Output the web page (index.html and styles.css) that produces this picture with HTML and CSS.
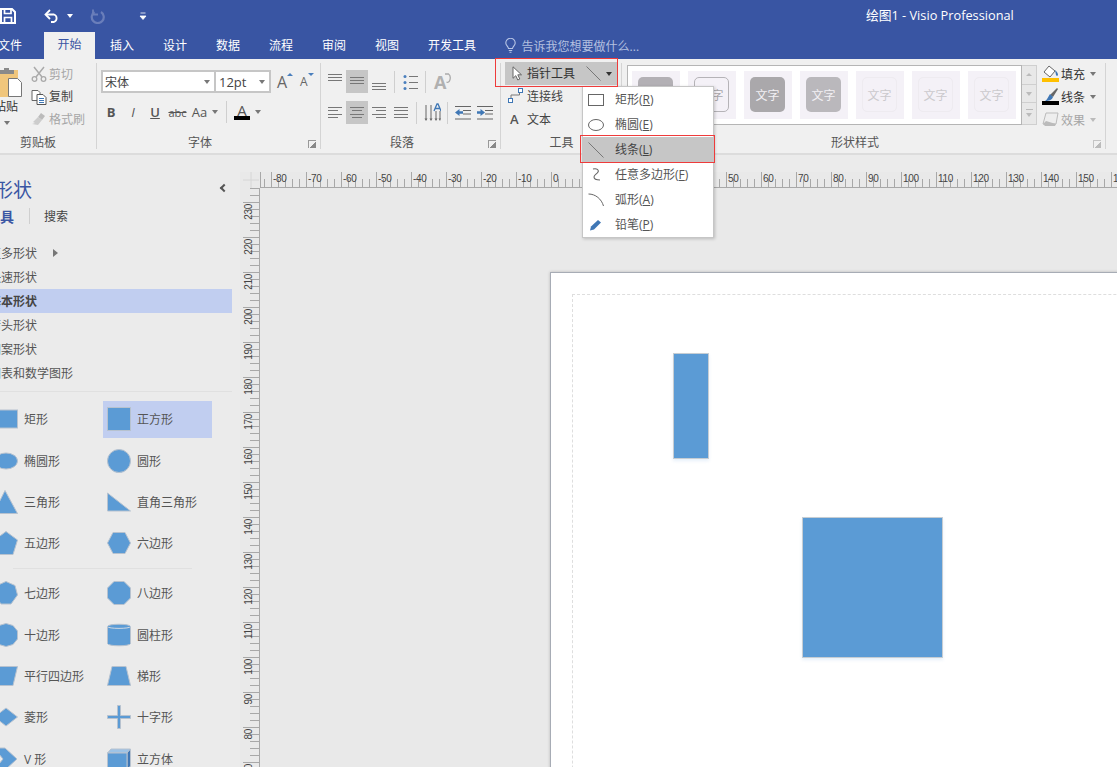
FILE: index.html
```html
<!DOCTYPE html>
<html lang="zh-CN">
<head>
    <meta charset="UTF-8">
    <title>绘图1 - Visio Professional</title>
    <link rel="stylesheet" href="styles.css">
</head>
<body>
<div class="app">
    <!-- title bar -->
    <div class="titlebar">
        <svg class="qa-save" width="16" height="16" viewBox="0 0 16 16"><path d="M1 1h11l3 3v11H1z" fill="none" stroke="#fff" stroke-width="2"/><path d="M4.500 1v4.500h6.500V1M4.500 15V9.500h7V15" fill="none" stroke="#fff" stroke-width="1.700"/></svg>
        <svg class="qa-undo" width="16" height="14" viewBox="0 0 16 14"><path d="M2 5.500h8a4 4 0 0 1 0 7.500H7" fill="none" stroke="#fff" stroke-width="1.800"/><path d="M6 1 1.500 5.500 6 10" fill="none" stroke="#fff" stroke-width="1.800"/></svg>
        <span class="caret caret-white qa-caret"></span>
        <svg class="qa-redo" width="15" height="15" viewBox="0 0 15 15"><path d="M4.500 3a6 6 0 1 0 6.500 0" fill="none" stroke="#6a7eba" stroke-width="2.200"/><path d="M3 .5v5h5" fill="none" stroke="#6a7eba" stroke-width="1.800"/></svg>
        <svg class="qa-more" width="8" height="8" viewBox="0 0 8 8"><path d="M1.500 1h5M1 4h6l-3 3.500z" fill="#fff" stroke="#fff" stroke-width=".8"/></svg>
        <div class="doc-title">绘图1 - Visio Professional</div>
    </div>

    <!-- tabs -->
    <div class="tabs">
        <span class="tab tab-file">文件</span>
        <span class="tab tab-active">开始</span>
        <span class="tab tab-first">插入</span>
        <span class="tab">设计</span>
        <span class="tab">数据</span>
        <span class="tab">流程</span>
        <span class="tab">审阅</span>
        <span class="tab">视图</span>
        <span class="tab">开发工具</span>
        <svg class="bulb" width="11" height="15" viewBox="0 0 11 15"><path d="M3.500 10.500C3 8 .8 7.500.8 5a4.700 4.700 0 0 1 9.400 0c0 2.500-2.200 3-2.700 5.500z" fill="none" stroke="#b9c6e6" stroke-width="1.100"/><path d="M3.800 12.500h3.400M4.500 14.300h2" stroke="#b9c6e6" stroke-width="1.100"/></svg>
        <span class="tell-me">告诉我您想要做什么...</span>
    </div>

    <!-- ribbon -->
    <div class="ribbon">
        <div class="group group-clip">
            <div class="group-body clip-body">
                <div class="paste">
                    <svg width="23" height="31" viewBox="0 0 23 31"><path d="M0 3h18v27H0z" fill="#f0c67c"/><path d="M0 3h4V1h5v2h5v4H0z" fill="#8a8a8a"/><path d="M8.500 11.500h9l4 4v14h-13z" fill="#fff" stroke="#777"/></svg>
                    <span class="paste-label">粘贴</span>
                    <span class="caret paste-caret"></span>
                </div>
                <div class="clip-list">
                    <div class="clip-row muted">
                        <svg width="16" height="16" viewBox="0 0 16 16"><path d="M3 1l8 10M13 1 5 11" stroke="#aaa" stroke-width="1.500" fill="none"/><circle cx="3.500" cy="13" r="2.300" fill="none" stroke="#aaa" stroke-width="1.300"/><circle cx="12.500" cy="13" r="2.300" fill="none" stroke="#aaa" stroke-width="1.300"/></svg>
                        <span>剪切</span>
                    </div>
                    <div class="clip-row">
                        <svg width="16" height="16" viewBox="0 0 16 16"><path d="M1 1.500h6l2 2v8H1z" fill="#fff" stroke="#666"/><path d="M6 5.500h6l3 3v7H6z" fill="#fff" stroke="#555"/><path d="M8 9.500h5M8 11.500h5M8 13.500h5" stroke="#3f77b5"/></svg>
                        <span>复制</span>
                    </div>
                    <div class="clip-row muted">
                        <svg width="16" height="16" viewBox="0 0 16 16"><path d="M10 2l4 3-3 4-4-3z" fill="#bbb"/><path d="M7 6l4 3-4 5-6-1 3-1-2-1z" fill="#ccc"/></svg>
                        <span>格式刷</span>
                    </div>
                </div>
            </div>
            <div class="group-label">剪贴板</div>
        </div>

        <div class="group group-font">
            <div class="group-body">
                <div class="font-row">
                    <div class="combo combo-name"><span>宋体</span><i class="caret"></i></div>
                    <div class="combo combo-size"><span>12pt</span><i class="caret"></i></div>
                    <span class="grow-a grow-up">A<i class="tri-up"></i></span>
                    <span class="grow-a grow-down">A<i class="tri-down"></i></span>
                </div>
                <div class="format-row">
                    <span class="fmt fmt-b">B</span>
                    <span class="fmt fmt-i">I</span>
                    <span class="fmt fmt-u">U</span>
                    <span class="fmt fmt-s">abc</span>
                    <span class="fmt fmt-aa">Aa</span>
                    <span class="caret fmt-caret"></span>
                    <span class="vsep fmt-sep"></span>
                    <span class="color-a">A</span>
                    <span class="caret color-caret"></span>
                </div>
            </div>
            <div class="group-label">字体<span class="launcher"></span></div>
        </div>

        <div class="group group-para">
            <div class="group-body">
                <div class="para-row para-top">
                    <span class="pbtn"><svg width="22" height="23"><path d="M4 4.500h14M4 7.500h14M4 10.500h14" stroke="#777"/></svg></span>
                    <span class="pbtn on"><svg width="22" height="23"><path d="M4 7.500h14M4 10.500h14M4 13.500h14" stroke="#777"/></svg></span>
                    <span class="pbtn"><svg width="22" height="23"><path d="M4 13.500h14M4 16.500h14M4 19.500h14" stroke="#777"/></svg></span>
                    <span class="vsep sep-a"></span>
                    <svg class="bullets" width="15" height="18" viewBox="0 0 15 18"><path d="M6 3.500h9M6 9.500h9M6 15.500h9" stroke="#777"/><circle cx="2" cy="3.500" r="1.500" fill="#4a7fbd"/><circle cx="2" cy="9.500" r="1.500" fill="#4a7fbd"/><circle cx="2" cy="15.500" r="1.500" fill="#4a7fbd"/></svg>
                    <span class="vsep sep-b"></span>
                    <span class="text-dir">A<svg width="8" height="10" viewBox="0 0 8 10"><path d="M2 1h3.500a2.500 4 0 0 1-2 8" fill="none" stroke="#aaa" stroke-width="1.300"/></svg></span>
                </div>
                <div class="para-row para-bottom">
                    <span class="pbtn"><svg width="22" height="23"><path d="M4 6.500h14M4 9.500h10M4 13.500h14M4 16.500h10" stroke="#777"/></svg></span>
                    <span class="pbtn on"><svg width="22" height="23"><path d="M4 6.500h14M6 9.500h10M4 13.500h14M6 16.500h10" stroke="#777"/></svg></span>
                    <span class="pbtn"><svg width="22" height="23"><path d="M4 6.500h14M8 9.500h10M4 13.500h14M8 16.500h10" stroke="#777"/></svg></span>
                    <span class="pbtn"><svg width="22" height="23"><path d="M4 6.500h14M4 9.500h14M4 13.500h14M4 16.500h14" stroke="#777"/></svg></span>
                    <span class="vsep sep-c"></span>
                    <svg class="line-space" width="17" height="19" viewBox="0 0 17 19"><path d="M2 2v14M7 2v14M12 8v8M16 8v8" stroke="#666"/><path d="M.5 15.500h3L2 18zM5.500 15.500h3L7 18zM10.500 15.500h3L12 18zM14.500 15.500h2.500L16 18z" fill="#666"/><path d="M10 8l3-7h1l3 7M11 5.500h5" fill="none" stroke="#3f77b5" stroke-width="1.300"/></svg>
                    <span class="vsep sep-d"></span>
                    <svg class="indent" width="16" height="14" viewBox="0 0 16 14"><path d="M0 .5h16M8 4.500h8M8 8h8M0 13h16" stroke="#666"/><path d="M0 6.500 4.500 3v2.300H8v2.400H4.500V10z" fill="#3f77b5"/></svg>
                    <svg class="indent indent-r" width="16" height="14" viewBox="0 0 16 14"><path d="M0 .5h16M8 4.500h8M8 8h8M0 13h16" stroke="#666"/><path d="M8 6.500 3.500 3v2.300H0v2.400h3.500V10z" fill="#3f77b5"/></svg>
                </div>
            </div>
            <div class="group-label">段落<span class="launcher"></span></div>
        </div>

        <div class="group group-tools">
            <div class="group-body">
                <div class="tool-main">
                    <svg class="tool-cursor" width="11" height="15" viewBox="0 0 11 15"><path d="M1 .8v11.500l2.800-2.600 2 4.300 2-1-2-4.200h3.700z" fill="#fff" stroke="#666"/></svg>
                    <span>指针工具</span>
                    <svg class="tool-line" width="15" height="15" viewBox="0 0 15 15"><path d="M.5.500l14 14" stroke="#777"/></svg>
                    <span class="caret caret-dark"></span>
                </div>
                <div class="tool-row">
                    <svg width="16" height="16" viewBox="0 0 16 16"><path d="M3 10V7h8.500V3" fill="none" stroke="#777"/><rect x="10.500" y=".5" width="4" height="4" fill="#fff" stroke="#3f77b5"/><rect x=".5" y="10.500" width="4" height="4" fill="#fff" stroke="#3f77b5"/></svg>
                    <span>连接线</span>
                </div>
                <div class="tool-row">
                    <span class="tool-a">A</span>
                    <span>文本</span>
                </div>
            </div>
            <div class="group-label">工具</div>
        </div>

        <div class="group group-styles">
            <div class="group-body styles-body">
                <div class="gallery">
                    <div class="gallery-items">
                        <div class="style-cell"><div class="swatch sw-mid"></div></div>
                        <div class="style-cell"><div class="swatch sw-outline">文字</div></div>
                        <div class="style-cell"><div class="swatch sw-dark">文字</div></div>
                        <div class="style-cell"><div class="swatch sw-light">文字</div></div>
                        <div class="style-cell"><div class="swatch sw-pale">文字</div></div>
                        <div class="style-cell"><div class="swatch sw-pale">文字</div></div>
                        <div class="style-cell"><div class="swatch sw-pale">文字</div></div>
                    </div>
                    <div class="gallery-scroll">
                        <span><i class="tri-up tri-gray"></i></span>
                        <span><i class="caret caret-pale"></i></span>
                        <span class="scroll-more"><i class="caret caret-pale"></i></span>
                    </div>
                </div>
                <div class="style-cmds">
                    <div class="style-cmd">
                        <svg width="17" height="17" viewBox="0 0 17 17"><path d="M7 1l6 5-5 6-6-5z" fill="#fff" stroke="#666"/><path d="M13 5c2 2 3 3 3 5 0 1-2 1-2 0z" fill="#3f77b5"/><path d="M0 13h17v4H0z" fill="#ffc000"/></svg>
                        <span>填充</span><i class="caret"></i>
                    </div>
                    <div class="style-cmd">
                        <svg width="17" height="17" viewBox="0 0 17 17"><path d="M15 0l1 1-5 8-3-2z" fill="#666"/><path d="M8 6l3 3c-1 3-4 4-8 4 2-1 3-4 5-7z" fill="#3f77b5"/><path d="M0 13h17v4H0z" fill="#000"/></svg>
                        <span>线条</span><i class="caret"></i>
                    </div>
                    <div class="style-cmd muted">
                        <svg width="17" height="17" viewBox="0 0 17 17"><path d="M4 2h12l-2 11H1z" fill="#eee" stroke="#bbb"/><path d="M1 13l3-3 10 3-1 2H3z" fill="#bbb"/></svg>
                        <span>效果</span><i class="caret"></i>
                    </div>
                </div>
            </div>
            <div class="group-label">形状样式<span class="launcher launcher-pale"></span></div>
        </div>
    </div>

    <div class="main">
        <!-- shapes panel -->
        <aside class="sidebar">
            <div class="side-head">形状<span class="side-collapse"></span></div>
            <div class="side-tabs"><b>模具</b><span class="vsep side-sep"></span><span>搜索</span></div>
            <ul class="stencils">
                <li>更多形状<i class="more-arrow"></i></li>
                <li>快速形状</li>
                <li class="current">基本形状</li>
                <li>箭头形状</li>
                <li>图案形状</li>
                <li>图表和数学图形</li>
            </ul>
            <div class="side-rule"></div>
            <div class="shape-grid">
                <div class="shape"><svg viewBox="0 0 24 24"><rect x=".5" y="3" width="23" height="18"/></svg>矩形</div>
                <div class="shape selected"><svg viewBox="0 0 24 24"><rect x=".5" y=".5" width="23" height="23"/></svg>正方形</div>
                <div class="shape"><svg viewBox="0 0 24 24"><ellipse cx="12" cy="12" rx="11.500" ry="8"/></svg>椭圆形</div>
                <div class="shape"><svg viewBox="0 0 24 24"><circle cx="12" cy="12" r="11.500"/></svg>圆形</div>
                <div class="shape"><svg viewBox="0 0 24 24"><polygon points="11,.5 23.500,23.500 -.5,23.500"/></svg>三角形</div>
                <div class="shape"><svg viewBox="0 0 24 24"><polygon points=".5,3 .5,21 23.500,21"/></svg>直角三角形</div>
                <div class="shape"><svg viewBox="0 0 24 24"><polygon points="12,.5 23.500,9 19,23.500 5,23.500 .5,9"/></svg>五边形</div>
                <div class="shape"><svg viewBox="0 0 24 24"><polygon points="6,1.500 18,1.500 23.500,12 18,22.500 6,22.500 .5,12"/></svg>六边形</div>
            </div>
            <div class="shape-rule"></div>
            <div class="shape-grid">
                <div class="shape"><svg viewBox="0 0 24 24"><polygon points="12,.5 21,4.500 23.500,14 17,23 7,23 .5,14 3,4.500"/></svg>七边形</div>
                <div class="shape"><svg viewBox="0 0 24 24"><polygon points="7,.5 17,.5 23.500,7 23.500,17 17,23.500 7,23.500 .5,17 .5,7"/></svg>八边形</div>
                <div class="shape"><svg viewBox="0 0 24 24"><polygon points="12,.5 19,2.500 23.500,8 23.500,16 19,21.500 12,23.500 5,21.500 .5,16 .5,8 5,2.500"/></svg>十边形</div>
                <div class="shape"><svg viewBox="0 0 24 24"><path d="M.5 3.500C.5 .5 23.500 .5 23.500 3.500v17c0 3-23 3-23 0z"/><path class="shape-top" d="M.5 3.500c0 2.500 23 2.500 23 0"/></svg>圆柱形</div>
                <div class="shape"><svg viewBox="0 0 24 24"><polygon points="5,2.500 23.500,2.500 19,21.500 .5,21.500"/></svg>平行四边形</div>
                <div class="shape"><svg viewBox="0 0 24 24"><polygon points="5,2.500 19,2.500 23.500,21.500 .5,21.500"/></svg>梯形</div>
                <div class="shape"><svg viewBox="0 0 24 24"><polygon points="12,3 23.500,12 12,21 .5,12"/></svg>菱形</div>
                <div class="shape"><svg viewBox="0 0 24 24"><polygon points="10.500,.5 13.500,.5 13.500,10.500 23.500,10.500 23.500,13.500 13.500,13.500 13.500,23.500 10.500,23.500 10.500,13.500 .5,13.500 .5,10.500 10.500,10.500"/></svg>十字形</div>
                <div class="shape"><svg viewBox="0 0 24 24"><polygon points="0,1 11,1 23,12 11,23 0,23 9,12"/></svg>V 形</div>
                <div class="shape"><svg viewBox="0 0 24 24"><polygon class="cube-top" points=".5,6 4,2 23.500,2 20,6"/><polygon class="cube-side" points="20,6 23.500,2 23.500,19 20,23"/><rect x=".5" y="6" width="19.500" height="17"/></svg>立方体</div>
            </div>
        </aside>

        <!-- drawing area -->
        <section class="drawing">
            <div class="ruler-corner"><svg width="16" height="16" viewBox="0 0 16 16"><path d="M8 0v16M0 8h16" stroke="#d6d6d6"/></svg></div>
            <div class="ruler-h">
                <span class="h-lead"></span>
                <span>-80</span><span>-70</span><span>-60</span><span>-50</span><span>-40</span><span>-30</span><span>-20</span><span>-10</span><span>0</span><span>10</span><span>20</span><span>30</span><span>40</span><span>50</span><span>60</span><span>70</span><span>80</span><span>90</span><span>100</span><span>110</span><span>120</span><span>130</span><span>140</span><span>150</span><span>160</span><span>170</span>
            </div>
            <div class="ruler-v">
                <span class="v-lead"></span>
                <span><em>230</em></span><span><em>220</em></span><span><em>210</em></span><span><em>200</em></span><span><em>190</em></span><span><em>180</em></span><span><em>170</em></span><span><em>160</em></span><span><em>150</em></span><span><em>140</em></span><span><em>130</em></span><span><em>120</em></span><span><em>110</em></span><span><em>100</em></span><span><em>90</em></span><span><em>80</em></span><span><em>70</em></span>
            </div>
            <div class="stage">
                <div class="page">
                    <div class="page-margin"></div>
                    <div class="node node-a"></div>
                    <div class="node node-b"></div>
                </div>
            </div>
        </section>
    </div>

    <!-- open dropdown and the red marks over it -->
    <div class="dropdown">
        <div class="dd-item"><svg width="16" height="12" viewBox="0 0 16 12"><rect x=".5" y=".5" width="15" height="11" fill="#fff" stroke="#666"/></svg><span>矩形(<u>R</u>)</span></div>
        <div class="dd-item"><svg width="16" height="12" viewBox="0 0 16 12"><ellipse cx="8" cy="6" rx="7.500" ry="5.500" fill="#fff" stroke="#666"/></svg><span>椭圆(<u>E</u>)</span></div>
        <div class="dd-item dd-on"><svg width="16" height="16" viewBox="0 0 16 16"><path d="M.5.500l15 15" stroke="#777"/></svg><span>线条(<u>L</u>)</span></div>
        <div class="dd-item"><svg width="16" height="14" viewBox="0 0 16 14"><path d="M5 1c4-1 6 1 5 3S6 7 6 9s3 3 6 3" fill="none" stroke="#666" stroke-width="1.100"/></svg><span>任意多边形(<u>F</u>)</span></div>
        <div class="dd-item"><svg width="16" height="14" viewBox="0 0 16 14"><path d="M.5 1c7 0 13 5 15 12" fill="none" stroke="#666"/></svg><span>弧形(<u>A</u>)</span></div>
        <div class="dd-item"><svg width="16" height="14" viewBox="0 0 16 14"><path d="M10 2l3 2.500-7 7-4 1 1-4z" fill="#3f77b5"/></svg><span>铅笔(<u>P</u>)</span></div>
    </div>
    <div class="mark mark-tool"></div>
    <div class="mark mark-line"></div>
</div>
</body>
</html>
```

FILE: styles.css
```css
* {
    box-sizing: border-box;
}

html, body {
    margin: 0;
    height: 100%;
    overflow: hidden;
}

body {
    font-family: "Open Sans", "Noto Sans CJK SC", sans-serif;
    font-size: 12px;
    color: #444;
    background: #ebebeb;
}

svg {
    display: block;
    flex: none;
}

.app {
    position: relative;
    width: 1117px;
    height: 767px;
    overflow: hidden;
}

.muted {
    color: #a6a6a6;
}

.caret {
    display: inline-block;
    width: 0;
    height: 0;
    border-left: 3.5px solid transparent;
    border-right: 3.5px solid transparent;
    border-top: 4px solid #777;
}

.caret-white {
    border-top-color: #fff;
}

.caret-dark {
    border-top-color: #333;
}

.caret-pale {
    border-top-color: #bbb;
}

.vsep {
    display: block;
    width: 1px;
    height: 22px;
    background: #cfcfcf;
    flex: none;
}

/* title bar */
.titlebar {
    display: flex;
    align-items: center;
    height: 32px;
    background: #3955a3;
    color: #fff;
}

.qa-undo {
    margin-left: 28px;
}

.qa-caret {
    margin-left: 7px;
}

.qa-redo {
    margin-left: 17px;
}

.qa-more {
    margin-left: 34px;
}

.doc-title {
    margin-left: 719px;
    margin-bottom: 4px;
    font-size: 12.75px;
    white-space: nowrap;
}

/* tabs */
.tabs {
    display: flex;
    align-items: center;
    height: 27px;
    background: #3955a3;
    color: #fff;
}

.tab {
    flex: none;
    padding: 0 14.5px;
    line-height: 25px;
    white-space: nowrap;
}

.tab-file {
    margin-left: -16.5px;
    width: 60.5px;
}

.tab-active {
    width: 51px;
    padding: 0;
    height: 27px;
    line-height: 25px;
    text-align: center;
    background: #f0f0f0;
    color: #3955a3;
}

.tab-first {
    margin-left: .5px;
}

.bulb {
    margin-left: 14px;
}

.tell-me {
    margin-left: 6px;
    color: #b4c0e0;
    white-space: nowrap;
}

/* ribbon */
.ribbon {
    display: flex;
    height: 96px;
    background: #f0f0f0;
    border-bottom: 2px solid #dcdcdc;
}

.group {
    position: relative;
    display: flex;
    flex-direction: column;
    flex: none;
}

.group::after {
    content: "";
    position: absolute;
    right: 0;
    top: 4px;
    height: 86px;
    width: 1px;
    background: #d4d4d4;
}

.group-body {
    flex: 1;
}

.group-label {
    position: relative;
    height: 17px;
    margin-bottom: 1px;
    padding-right: 18px;
    line-height: 15px;
    text-align: center;
    color: #555;
}

.launcher {
    position: absolute;
    right: 5px;
    top: 5px;
    width: 8px;
    height: 8px;
    border-left: 1px solid #999;
    border-top: 1px solid #999;
    background: linear-gradient(135deg, transparent 55%, #888 55%);
}

.launcher-pale {
    border-color: #c4c4c4;
    background: linear-gradient(135deg, transparent 55%, #bbb 55%);
}

/* clipboard */
.group-clip {
    width: 97px;
}

.group-clip .group-label {
    width: 76px;
    padding: 0;
}

.clip-body {
    display: flex;
}

.paste {
    width: 23px;
    padding-top: 8px;
}

.paste-label {
    display: block;
    margin-left: -6px;
    line-height: 18px;
    white-space: nowrap;
    color: #333;
}

.paste-caret {
    display: block;
    margin: 5px 0 0 4px;
}

.clip-list {
    margin-left: 8px;
    padding-top: 4px;
}

.clip-row {
    display: flex;
    align-items: center;
    gap: 2px;
    height: 22.5px;
    white-space: nowrap;
}

.clip-row span {
    margin-bottom: 1px;
}

/* font */
.group-font {
    width: 224px;
}

.group-font .group-body {
    padding: 11px 0 0 4px;
}

.font-row {
    display: flex;
    align-items: center;
    height: 23px;
}

.combo {
    display: flex;
    align-items: center;
    justify-content: space-between;
    height: 23px;
    padding: 0 4px 0 2px;
    background: #fff;
    border: 2px solid #c6c6c6;
    color: #444;
}

.combo-name {
    width: 115px;
}

.combo-size {
    width: 56px;
    margin-left: -1px;
    padding-left: 3px;
    border-left-width: 1px;
    font-size: 13px;
}

.grow-a {
    position: relative;
    color: #666;
    line-height: 20px;
}

.grow-up {
    margin-left: 6px;
    width: 14px;
    font-size: 16px;
}

.grow-down {
    margin-left: 9px;
    width: 12px;
    font-size: 12px;
}

.tri-up,
.tri-down {
    position: absolute;
    right: -2px;
    top: 1px;
    width: 0;
    height: 0;
    border-left: 3px solid transparent;
    border-right: 3px solid transparent;
}

.tri-up {
    border-bottom: 3px solid #4a7fbd;
}

.tri-down {
    border-top: 3px solid #4a7fbd;
}

.format-row {
    display: flex;
    align-items: center;
    height: 22px;
    margin: 8px 0 0 -1px;
}

.fmt {
    width: 22px;
    text-align: center;
    font-size: 13px;
    color: #555;
    flex: none;
}

.fmt-b {
    font-weight: 700;
}

.fmt-i {
    font-style: italic;
}

.fmt-u {
    text-decoration: underline;
    font-weight: 600;
}

.fmt-s {
    width: 23px;
    font-size: 11px;
    text-decoration: line-through;
}

.fmt-aa {
    width: 21px;
}

.fmt-caret {
    margin-left: 2px;
}

.fmt-sep {
    margin-left: 8px;
}

.color-a {
    width: 16px;
    margin-left: 7px;
    height: 16px;
    line-height: 13px;
    font-size: 15px;
    text-align: center;
    color: #555;
    border-bottom: 4px solid #000;
}

.color-caret {
    margin-left: 5px;
}

/* paragraph */
.group-para {
    width: 180px;
}

.group-para .group-body {
    padding: 11px 0 0 3px;
}

.para-row {
    display: flex;
    align-items: center;
    height: 23px;
}

.para-bottom {
    margin-top: 8px;
}

.pbtn {
    width: 22px;
    height: 23px;
    flex: none;
}

.pbtn.on {
    background: #c6c6c6;
}

.sep-a {
    margin-left: 4px;
}

.bullets {
    margin-left: 8px;
}

.sep-b {
    margin-left: 7px;
}

.text-dir {
    display: flex;
    align-items: flex-start;
    margin-left: 8px;
    font-size: 18px;
    font-weight: 700;
    line-height: 22px;
    color: #b0b0b0;
}

.text-dir svg {
    margin: 2px 0 0 -3px;
}

.sep-c {
    margin-left: 4px;
}

.line-space {
    margin-left: 7px;
}

.sep-d {
    margin-left: 6px;
}

.indent {
    margin-left: 7px;
}

.indent-r {
    margin-left: 6px;
}

/* tools */
.group-tools {
    width: 121px;
}

.group-tools .group-label {
    padding: 0;
}

.group-tools .group-body {
    padding: 3px 4px 0 4px;
}

.tool-main {
    display: flex;
    align-items: center;
    height: 23px;
    padding-left: 7px;
    background: #c6c6c6;
    color: #333;
}

.tool-main span:first-of-type {
    margin: 0 0 1px 4px;
}

.tool-line {
    margin-left: 11px;
}

.tool-main .caret {
    margin-left: 5px;
}

.tool-row {
    display: flex;
    align-items: center;
    gap: 3px;
    height: 23px;
    margin-left: 3px;
    padding-bottom: 2px;
    white-space: nowrap;
    color: #444;
}

.tool-a {
    width: 16px;
    padding-left: 2px;
    font-weight: 600;
    font-size: 13px;
    color: #555;
}

/* shape styles */
.group-styles {
    width: 484px;
}

.styles-body {
    display: flex;
    padding: 6px 0 0 5px;
}

.gallery {
    display: flex;
    width: 410px;
    height: 60px;
}

.gallery-items {
    display: flex;
    gap: 8px;
    width: 395px;
    padding: 5px 0 0 4px;
    background: #fff;
    border: 1px solid #b5b5b5;
}

.style-cell {
    width: 48px;
    height: 48px;
    padding: 6px 7px 7px 6px;
    background: #f4f1f7;
}

.swatch {
    display: flex;
    align-items: center;
    justify-content: center;
    width: 35px;
    height: 35px;
    border-radius: 5px;
}

.sw-mid {
    background: #b3b0b5;
}

.sw-outline {
    border: 1px solid #b5b3b7;
    color: #a8a6aa;
}

.sw-dark {
    background: #aaa8ab;
    color: #f2f0f4;
}

.sw-light {
    background: #bab8bc;
    color: #f2f0f4;
}

.sw-pale {
    border: 1px solid #eeebf0;
    color: #cbc9cd;
}

.gallery-scroll {
    display: flex;
    flex-direction: column;
    width: 15px;
}

.gallery-scroll span {
    position: relative;
    display: flex;
    align-items: center;
    justify-content: center;
    flex: 1;
    background: #e8e8e8;
    border: 1px solid #cfcfcf;
    border-left: none;
    margin-top: -1px;
}

.gallery-scroll span:first-child {
    margin-top: 0;
}

.gallery-scroll .tri-gray {
    position: static;
    border-bottom-color: #bbb;
}

.scroll-more {
    padding-top: 3px;
}

.scroll-more::before {
    content: "";
    position: absolute;
    top: 6px;
    left: 4px;
    width: 7px;
    height: 1px;
    background: #bbb;
}

.style-cmds {
    margin: -3px 0 0 5px;
}

.style-cmd {
    display: flex;
    align-items: center;
    height: 23px;
    gap: 2px;
    white-space: nowrap;
    color: #333;
}

.style-cmd .caret {
    margin-left: 3px;
}

.style-cmd.muted {
    color: #a6a6a6;
}

.style-cmd.muted .caret {
    border-top-color: #bbb;
}

/* shapes panel */
.main {
    display: flex;
    height: 612px;
}

.sidebar {
    width: 232px;
    margin-right: 8px;
    padding-top: 23px;
    flex: none;
    overflow: hidden;
    background: #ebebeb;
}

.side-head {
    position: relative;
    height: 24px;
    line-height: 24px;
    font-size: 19px;
    text-indent: -6px;
    color: #3955a3;
}

.side-collapse {
    position: absolute;
    right: 5px;
    top: 7px;
    width: 6px;
    height: 6px;
    border-left: 2px solid #555;
    border-bottom: 2px solid #555;
    transform: rotate(45deg);
}

.side-tabs {
    display: flex;
    align-items: center;
    height: 24px;
    margin-top: 2px;
}

.side-tabs b {
    margin-left: -14px;
    font-size: 14px;
    color: #3955a3;
}

.side-sep {
    height: 16px;
    margin: 0 14px 0 15px;
}

.stencils {
    margin: 13px 0 0;
    padding: 0;
    list-style: none;
}

.stencils li {
    position: relative;
    height: 24px;
    line-height: 26px;
    text-indent: -11px;
    white-space: nowrap;
    color: #555;
}

.stencils .current {
    background: #c1cef0;
    font-weight: 700;
    color: #444;
}

.more-arrow {
    position: absolute;
    left: 53px;
    top: 8px;
    border-left: 5px solid #777;
    border-top: 4.5px solid transparent;
    border-bottom: 4.5px solid transparent;
}

.side-rule {
    height: 1px;
    margin-top: 6px;
    background: #e0e0e0;
}

.shape-grid {
    display: grid;
    grid-template-columns: 113px 109px;
    grid-auto-rows: 37px;
    row-gap: 4.33px;
    margin-left: -10px;
}

.side-rule + .shape-grid {
    margin-top: 9px;
}

.shape-rule {
    height: 1px;
    margin: 6px 40px 6px 13px;
    background: #e0e0e0;
}

.shape {
    display: flex;
    align-items: center;
    gap: 6px;
    padding: 0 0 .5px 4px;
    white-space: nowrap;
    color: #555;
}

.shape.selected {
    background: #c1cef0;
}

.shape svg {
    width: 24px;
    height: 24px;
    overflow: visible;
    fill: #5b9bd5;
    stroke: #b7c2cf;
    stroke-width: 1;
}

.shape .shape-top {
    fill: none;
    stroke: #cfd8e2;
}

.shape .cube-top {
    fill: #9dc3e6;
}

.shape .cube-side {
    fill: #3f77b5;
}

/* rulers and canvas */
.drawing {
    display: grid;
    flex: 1;
    min-width: 0;
    grid-template-columns: 20px 1fr;
    grid-template-rows: 16px 1fr;
    margin-top: 17px;
    background: #e9e9e9;
    overflow: hidden;
    font-family: "Liberation Sans", sans-serif;
    font-size: 10px;
    letter-spacing: -.3px;
    color: #444;
}

.ruler-corner {
    padding: 0 0 0 3px;
}

.ruler-h {
    display: flex;
    height: 16px;
    overflow: hidden;
    border-bottom: 1px solid #a8a8a8;
    background: linear-gradient(90deg, #a8a8a8 1px, transparent 1px) 4px bottom / 7px 8px repeat-x;
}

.ruler-h span {
    flex: none;
    width: 35px;
    height: 15px;
    padding-left: 1px;
    line-height: 14px;
    border-left: 1px solid #a8a8a8;
}

.ruler-h .h-lead {
    width: 11px;
    padding: 0;
}

.ruler-v {
    overflow: hidden;
    border-right: 1px solid #a8a8a8;
    background: linear-gradient(#a8a8a8 1px, transparent 1px) right top / 9px 7px repeat-y;
}

.ruler-v span {
    display: block;
    width: 16px;
    margin-left: 3px;
    height: 35px;
    border-top: 1px solid #a8a8a8;
}

.ruler-v .v-lead {
    height: 14px;
    border: none;
}

.ruler-v em {
    display: block;
    padding-bottom: 1px;
    font-style: normal;
    line-height: 11px;
    writing-mode: vertical-rl;
    transform: rotate(180deg);
}

.stage {
    position: relative;
    overflow: hidden;
}

.page {
    position: absolute;
    left: 290px;
    top: 84px;
    width: 900px;
    height: 700px;
    background: #fff;
    border-left: 1px solid #a7acb5;
    border-top: 1px solid #a7acb5;
    box-shadow: 0 0 3px rgba(0, 0, 0, .2);
}

.page-margin {
    position: absolute;
    left: 21px;
    top: 21px;
    width: 800px;
    height: 600px;
    border: 1px dashed #dedede;
}

.node {
    position: absolute;
    background: #5b9bd5;
    border: 1px solid #c6cdd3;
    box-shadow: 0 2px 3px rgba(91, 155, 213, .15);
}

.node-a {
    left: 122px;
    top: 80px;
    width: 36px;
    height: 106px;
}

.node-b {
    left: 251px;
    top: 244px;
    width: 141px;
    height: 141px;
}

/* dropdown over the ribbon */
.dropdown {
    position: absolute;
    left: 582px;
    top: 86px;
    width: 132px;
    height: 152px;
    background: #fff;
    border: 1px solid #c6c6c6;
    box-shadow: 1px 1px 3px rgba(0, 0, 0, .2);
}

.dd-item {
    display: flex;
    align-items: center;
    height: 25px;
    padding-left: 5px;
    white-space: nowrap;
    color: #555;
}

.dd-item span {
    margin: 0 0 2px 11px;
}

.dd-on {
    background: #c6c6c6;
    color: #444;
}

.mark {
    position: absolute;
    border: 1px solid #ee3b3b;
}

.mark-tool {
    left: 495px;
    top: 58px;
    width: 123px;
    height: 29px;
}

.mark-line {
    left: 580px;
    top: 135px;
    width: 135px;
    height: 28px;
}
```
